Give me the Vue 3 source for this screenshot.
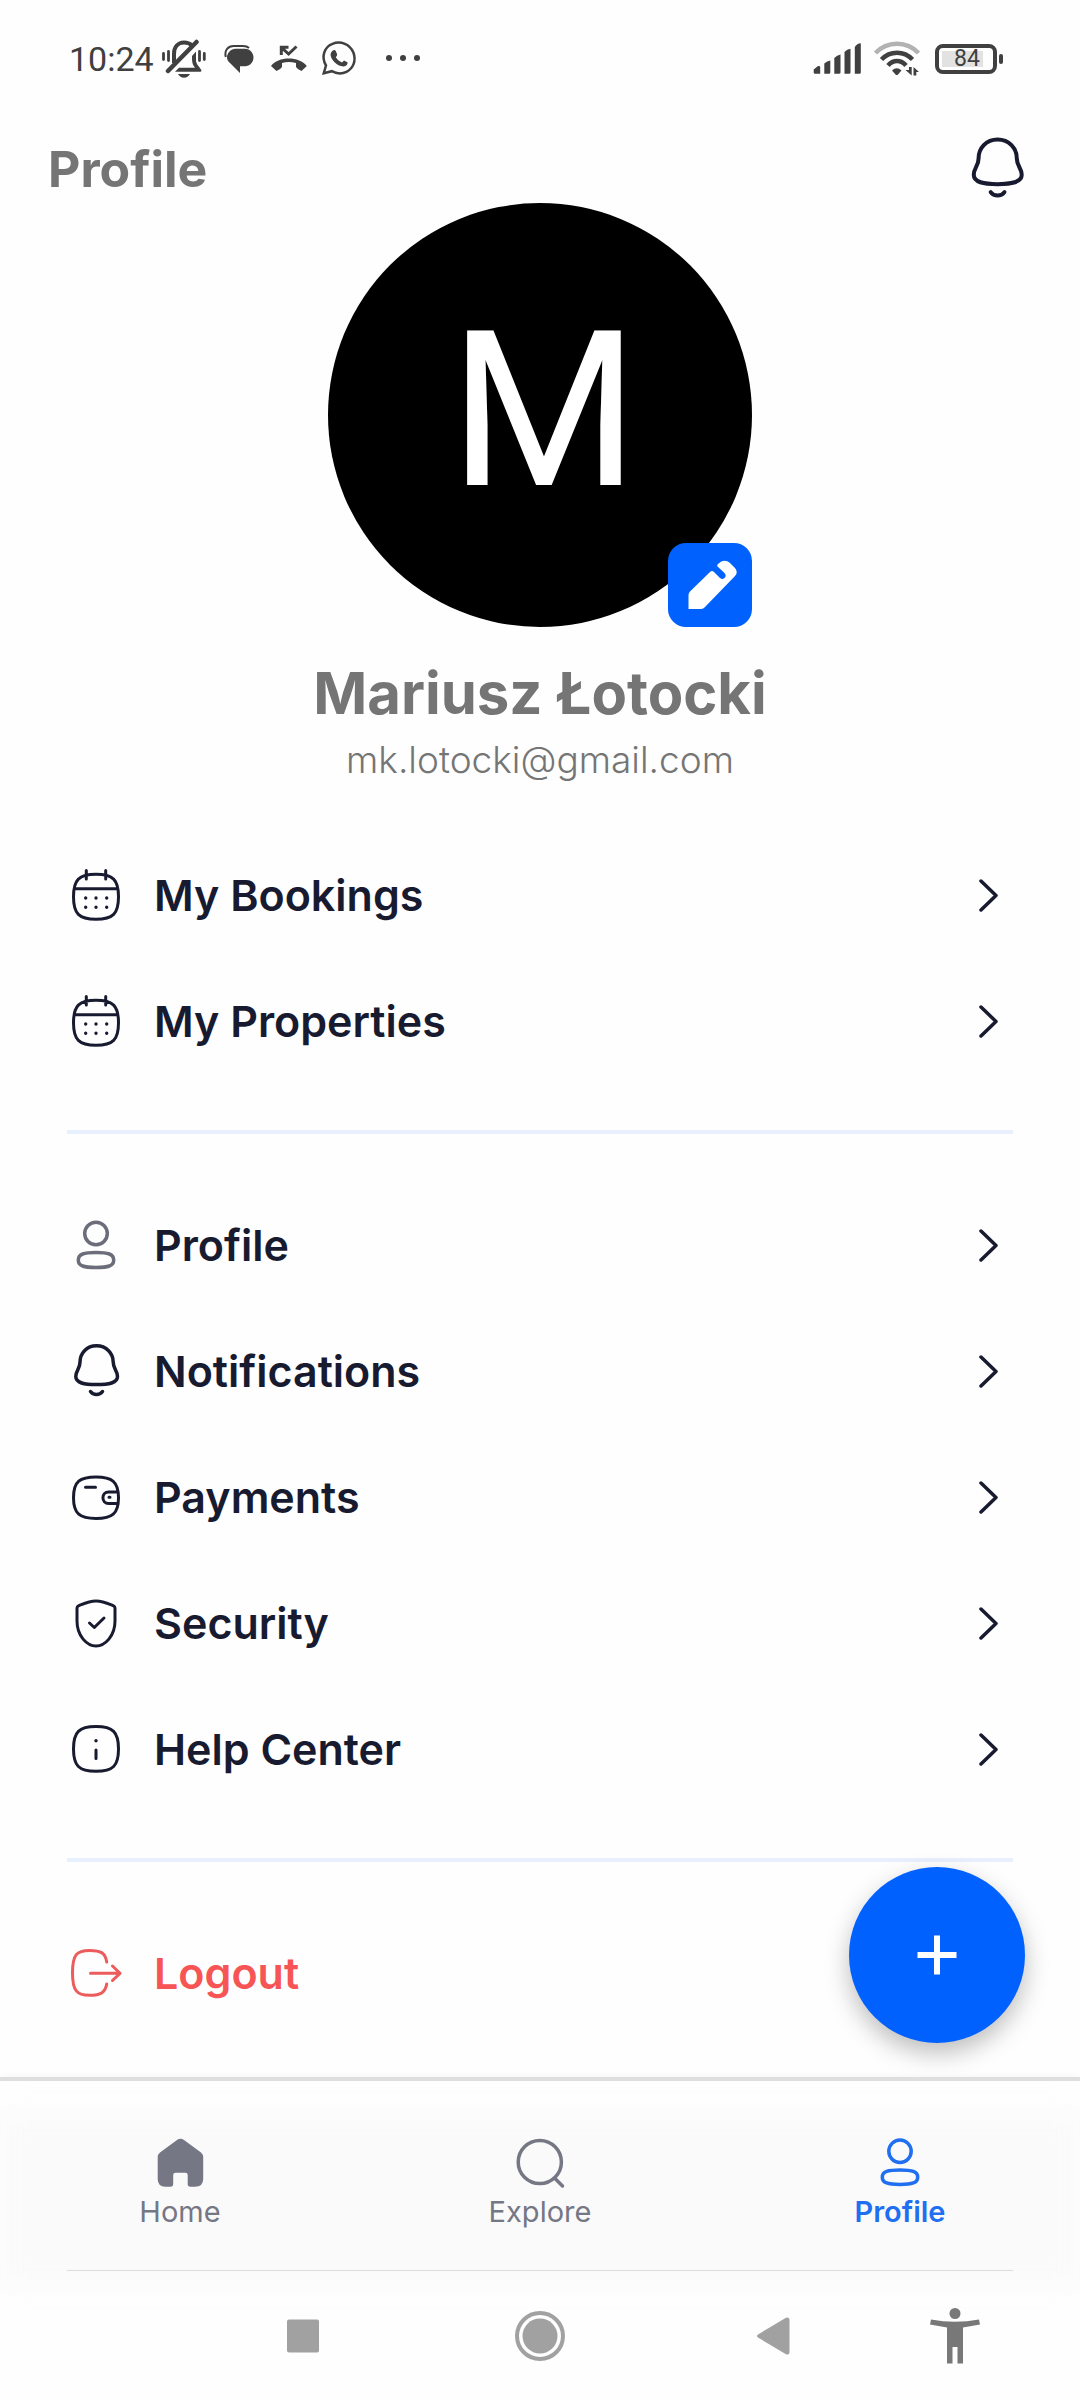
<script setup>
import { ref } from 'vue'

const user = { name: 'Mariusz Łotocki', email: 'mk.lotocki@gmail.com', initial: 'M' }

const groups = [
  [
    { icon: 'calendar', label: 'My Bookings' },
    { icon: 'calendar', label: 'My Properties' },
  ],
  [
    { icon: 'person', label: 'Profile' },
    { icon: 'bell', label: 'Notifications' },
    { icon: 'wallet', label: 'Payments' },
    { icon: 'shield', label: 'Security' },
    { icon: 'info', label: 'Help Center' },
  ],
  [{ icon: 'logout', label: 'Logout', danger: true }],
]

const tabs = ['Home', 'Explore', 'Profile']
const active = ref('Profile')
</script>

<template>
  <div class="screen">
    <div class="status">
      <div class="status-side">
        <span class="time">10:24</span>
        <svg width="44" height="40" viewBox="0 0 44 40" fill="none" stroke="#404040">
          <path d="M12 24V15C12 8 16 3.500 22 3.500C25.500 3.500 28 4.500 30 6.500" stroke-width="4" />
          <path d="M34 12.500V21C34 26 37.500 27 39.500 31.500Q39.500 32.700 38 32.700H13L17 28.700H33C30 25 30 22 30 17Z" fill="#404040" stroke="none" />
          <path d="M34.500 3L6 32" stroke-width="4.500" stroke-linecap="round" />
          <path d="M16 35H28Q26 38.700 22 38.700T16 35Z" fill="#404040" stroke="none" />
          <path d="M1.500 14.500V20.500M6.500 12.500V21.500M37.500 12.500V21.500M42.300 14.500V20.500" stroke-width="2.800" stroke-linecap="round" />
        </svg>
        <svg width="48" height="40" viewBox="0 0 48 40" fill="#404040">
          <path d="M21.500 9.800H31C36 9.800 39.500 14 39.500 18.500S36 27.300 31 27.300H26V33.900L16.500 24.500C14 22.500 13 20.500 13 18.500C13 14 17 9.800 21.500 9.800Z" />
          <path d="M11.800 18C10 11 14.500 7 19.500 7H29Q33 7 35 9" fill="none" stroke="#404040" stroke-width="2" />
        </svg>
        <svg width="38" height="40" viewBox="0 0 38 40" fill="#404040">
          <path d="M1 27C8 17 29.500 17 36.800 27L31.500 32Q27 30 26 28V24C21 22.500 16.500 22.500 12 24V28Q10.500 30.500 6.500 32Z" />
          <path d="M11.300 16V8.300H18.500M11.300 8.300L18.600 15L26.500 7.500" fill="none" stroke="#404040" stroke-width="3" />
        </svg>
        <svg width="46" height="40" viewBox="0 0 46 40" fill="none" stroke="#404040">
          <path d="M7.800 34.200L10 26.500C5 18 8 8 16.500 4.800C25 1.500 34 5.500 37.400 13.500C40.500 22 37 29.500 30.500 32.800C26 35 20.500 34.800 15.800 32.200Z" stroke-width="2.500" />
          <path d="M16.500 11.800Q18.500 10 19.800 12L21.200 15.500Q21 17 19.800 18.300C21.500 21 23.500 22.500 26 23.500L28 21.500L31.500 23.200C32 25 30.500 27 27.500 27.400C21 27.500 14 20 14.600 15Q15 13 16.500 11.800Z" fill="#404040" stroke="none" />
        </svg>
        <svg width="54" height="40" viewBox="0 0 54 40" fill="#404040">
          <circle cx="19" cy="19" r="3" /><circle cx="33" cy="19" r="3" /><circle cx="47" cy="19" r="3" />
        </svg>
      </div>
      <div class="status-side">
        <svg width="52" height="40" viewBox="0 0 52 40" fill="#404040">
          <path d="M1.700 30.500L6 27Q8.200 26.500 8.200 28V34.700H3Q1.700 34.700 1.700 33.500ZM12.300 24.500Q15 22 18.300 21.500V33.500Q18.300 34.700 17 34.700H12.300ZM22.300 19Q25 16 28.500 15.500V33.500Q28.500 34.700 27 34.700H22.300ZM32.500 13Q35 10 38.500 9.800V33.500Q38.500 34.700 37 34.700H32.500ZM42.800 8Q45 4.500 48.800 4.300V33.500Q48.800 34.700 47.500 34.700H42.800Z" />
        </svg>
        <svg width="52" height="40" viewBox="0 0 52 40" fill="none" stroke="#404040" stroke-width="4">
          <path d="M3.500 14C15 1.500 35 1.500 46.500 14" stroke="#b2b2b2" stroke-width="4.500" />
          <path d="M9.500 20.500C18 11.500 32 11.500 40.500 20.500M16 26.500C21 20.500 29 20.500 34 26.500" stroke-width="4.500" />
          <path d="M20 31.500Q24.700 27 29.500 31.500L26 35.500Q24.700 36.500 23.500 35.500Z" fill="#404040" stroke="none" />
          <path d="M39.700 28V36.500L33.500 31H37V28ZM41.500 36.500V28L47 33H44.300V36.500Z" fill="#404040" stroke="none" />
        </svg>
        <div class="battery"><div class="cell"><span class="charge">84</span></div><i class="nub"></i></div>
      </div>
    </div>

    <header class="top">
      <h1>Profile</h1>
      <button type="button" class="icon-button" aria-label="Notifications">
        <svg width="60" height="69" viewBox="0 0 52 60" fill="none" stroke="#181b30" stroke-width="3.500" stroke-linecap="round">
          <path d="M26.500 4.800C16.500 4.800 10 12.500 10 21C10 28 5.800 29.500 5.800 35.500C5.800 42 14 43.600 26.500 43.600S47.500 42 47.500 35.500C47.500 29.500 43.200 28 43.200 21C43.200 12.500 36.500 4.800 26.500 4.800Z" />
          <path d="M20.500 50.500C23.500 54.600 29.500 54.600 32.500 50.500" />
        </svg>
      </button>
    </header>

    <main>
      <section class="identity">
        <div class="avatar">
          <span class="initial">{{ user.initial }}</span>
          <button type="button" class="edit" aria-label="Edit photo">
            <svg width="84" height="84" viewBox="0 0 84 84" fill="#fff">
              <path d="M20.500 66V52Q20.500 50 22 48.500L42 29Q44 27 46 29L52 35Q55 37 57 34.500Q58.500 32.500 56.500 30L49.500 23.500Q48.500 22 50 21C54 17 58 16.500 62 20L67 25Q70.500 29.500 67 33L37 64Q35.500 66 33 66Z" />
            </svg>
          </button>
        </div>
        <h2>{{ user.name }}</h2>
        <p class="email">{{ user.email }}</p>
      </section>

      <nav class="menu" aria-label="Account">
        <ul v-for="(group, g) in groups" :key="g">
          <li v-for="item in group" :key="item.label">
            <a href="#" class="row" :class="{ danger: item.danger }">
              <svg class="glyph" :class="item.icon" width="52" height="60" viewBox="0 0 52 60">
                <template v-if="item.icon === 'calendar'">
                  <path d="M26 9.200C43 9.200 48.500 14.700 48.500 31.700S43 54.200 26 54.200S3.500 48.700 3.500 31.700S9 9.200 26 9.200ZM5 23.700H47M16.300 5.500V14M35.700 5.500V14" />
                  <path d="M15.700 33h.01M26 33h.01M36.700 33h.01M15.700 42.300h.01M26 42.300h.01M36.700 42.300h.01" class="dots" />
                </template>
                <template v-else-if="item.icon === 'person'">
                  <circle cx="26" cy="18.500" r="11.300" />
                  <path d="M26 37.500C38 37.500 43.700 39 43.700 45S38 52.500 26 52.500S8.300 51 8.300 45S14 37.500 26 37.500Z" />
                </template>
                <template v-else-if="item.icon === 'bell'">
                  <path d="M26.500 4.800C16.500 4.800 10 12.500 10 21C10 28 5.800 29.500 5.800 35.500C5.800 42 14 43.600 26.500 43.600S47.500 42 47.500 35.500C47.500 29.500 43.200 28 43.200 21C43.200 12.500 36.500 4.800 26.500 4.800Z" />
                  <path d="M20.500 50.500C23.500 54.600 29.500 54.600 32.500 50.500" />
                </template>
                <template v-else-if="item.icon === 'wallet'">
                  <path d="M26 10C42 10 48.500 14.500 48.500 30.700S42 51.500 26 51.500S3.500 47 3.500 30.700S10 10 26 10ZM47.500 25H38.700C31 25 31 36.500 38.700 36.500H47.500M15.500 20.300H25.500M39 30.300H40" />
                </template>
                <template v-else-if="item.icon === 'shield'">
                  <path d="M26 7.900C33 7.900 38 10.500 43.500 12.800Q45 13.500 45 15V28C45 43 35 53 26 53S7 43 7 28V15Q7 13.500 8.500 12.800C14 10.500 19 7.900 26 7.900ZM19.500 30L24.300 34.500L34 25" />
                </template>
                <template v-else-if="item.icon === 'info'">
                  <path d="M26 7.500C43 7.500 48.500 13 48.500 30S43 52.300 26 52.300S3.500 47 3.500 30S9 7.500 26 7.500ZM26 31V39.500" />
                  <path d="M26 21.700h.01" class="dots" />
                </template>
                <template v-else>
                  <path d="M36.700 19C35.500 10 31 7.500 19.500 7.500C7 7.500 2.500 11 2.500 30C2.500 48 7 52.300 19.500 52.300C31 52.300 35.500 49 36.700 41M20.500 30.300H49.500M42.500 23L50 30.300L42.500 37.500" />
                </template>
              </svg>
              <span class="label">{{ item.label }}</span>
              <svg v-if="!item.danger" class="chevron" width="22" height="34" viewBox="0 0 22 34">
                <path d="M3 3L18 17.500L3 32" />
              </svg>
            </a>
          </li>
        </ul>
      </nav>

      <button type="button" class="fab" aria-label="Add">
        <svg width="40" height="40" viewBox="0 0 40 40" stroke="#fff" stroke-width="6"><path d="M20 0.500V39.500M0.500 20H39.500" /></svg>
      </button>
    </main>

    <nav class="tabs" aria-label="Main">
      <button v-for="tab in tabs" :key="tab" type="button" class="tab" :class="{ active: tab === active }" @click="active = tab">
        <svg width="50" height="54" viewBox="0 0 50 54" fill="none" stroke="currentColor" stroke-width="3.500" stroke-linecap="round">
          <path v-if="tab === 'Home'" fill="currentColor" stroke="none" d="M22 4Q25.400 1.500 29 4L46 16.500Q48.200 18.500 48.200 21V43Q48.200 50.700 40 50.700H35.500Q32.700 50.700 32.700 48V39Q32.700 36.700 30.500 36.700H20.500Q18.200 36.700 18.200 39V48Q18.200 50.700 15.500 50.700H10.500Q2.700 50.700 2.700 43V21Q2.700 18.500 5 16.500Z" />
          <template v-else-if="tab === 'Explore'">
            <circle cx="24.800" cy="26" r="21.600" />
            <path d="M40 42.500L47.500 50" />
          </template>
          <template v-else>
            <circle cx="25" cy="15.300" r="11.200" />
            <path d="M25 34C37 34 42.700 35.500 42.700 41.200S37 48.400 25 48.400S7.300 47 7.300 41.200S13 34 25 34Z" />
          </template>
        </svg>
        <span>{{ tab }}</span>
      </button>
    </nav>

    <div class="system">
      <svg width="56" height="60" viewBox="0 0 56 60"><rect x="12" y="13.500" width="32" height="33" rx="2" fill="#a1a1a1" /></svg>
      <svg width="56" height="60" viewBox="0 0 56 60"><circle cx="28" cy="30" r="23" fill="none" stroke="#a1a1a1" stroke-width="4" /><circle cx="28" cy="30" r="17.500" fill="#a1a1a1" /></svg>
      <svg width="56" height="60" viewBox="0 0 56 60"><path d="M13 28.500L41 11.700Q44.500 10.500 44.500 14V46Q44.500 49.500 41 48.300L13 31.500Q11 30 13 28.500Z" fill="#a1a1a1" /></svg>
      <svg width="56" height="60" viewBox="0 0 56 60" fill="#787878">
        <circle cx="28" cy="7.500" r="5.500" />
        <path d="M4 13.500Q28 18 52 13.500L53 18.500L36 21.500V57.500H30.500V41H25.500V57.500H20V21.500L3 18.500Z" />
      </svg>
    </div>
  </div>
</template>

<style>
body {
  margin: 0;
  background: #fefefe;
}
</style>

<style scoped>
.screen {
  display: flex;
  flex-direction: column;
  min-height: 100vh;
  background: #fefefe;
  color: #181b30;
  font-family: Inter, "Noto Sans", sans-serif;
}
svg {
  display: block;
  flex: none;
}
button {
  margin: 0;
  padding: 0;
  border: 0;
  background: none;
  font: inherit;
  color: inherit;
  cursor: pointer;
}

.status {
  display: flex;
  align-items: center;
  justify-content: space-between;
  height: 118px;
  padding: 0 77px 0 69px;
  color: #404040;
  font-family: Roboto, sans-serif;
}
.status-side {
  display: flex;
  align-items: center;
  gap: 8px;
}
.time {
  font-size: 34px;
  line-height: 40px;
}
.battery {
  display: flex;
  align-items: center;
  gap: 2px;
  padding-left: 3px;
}
.cell {
  box-sizing: border-box;
  width: 62px;
  height: 30px;
  padding: 3px;
  border: 4px solid #404040;
  border-radius: 8px;
}
.charge {
  display: block;
  width: 41px;
  background: #e2e2e2;
  font-size: 23px;
  line-height: 16px;
  text-indent: 12px;
}
.nub {
  width: 4px;
  height: 10px;
  border-radius: 2px;
  background: #404040;
}

.top {
  display: flex;
  align-items: center;
  justify-content: space-between;
  margin-top: 16px;
  padding: 0 53px 0 48px;
}
h1,
h2,
.email {
  margin: 0;
  color: #757575;
}
h1 {
  font-size: 50px;
  line-height: 60px;
}

main {
  position: relative;
  flex: 1;
  padding-bottom: 41px;
}
.identity {
  display: flex;
  flex-direction: column;
  align-items: center;
}
.avatar {
  position: relative;
  width: 424px;
  height: 424px;
  border-radius: 50%;
  background: #000;
  color: #fff;
  text-align: center;
}
.initial {
  display: block;
  padding-left: 8px;
  font-family: Roboto, sans-serif;
  font-size: 217px;
  line-height: 416px;
}
.edit {
  position: absolute;
  right: 0;
  bottom: 0;
  border-radius: 18px;
  background: #0061ff;
}
h2 {
  margin-top: 36px;
  font-size: 58px;
  line-height: 60px;
}
.email {
  margin-top: 15px;
  font-size: 37px;
  font-weight: 300;
  line-height: 44px;
}

.menu {
  margin: 50px 67px 0;
}
ul {
  margin: 0;
  padding: 0;
  list-style: none;
}
ul + ul {
  margin-top: 46px;
  padding-top: 48px;
  border-top: 4px solid #e8effd;
}
.row {
  display: flex;
  align-items: center;
  gap: 32px;
  height: 126px;
  padding: 0 13px 0 3px;
  color: #181b30;
  text-decoration: none;
}
.glyph,
.chevron {
  fill: none;
  stroke: #181b30;
  stroke-width: 3;
  stroke-linecap: round;
  stroke-linejoin: round;
}
.chevron,
.bell {
  stroke-width: 3.5;
}
.person {
  stroke: #6c6d7a;
  stroke-width: 3.5;
}
.dots {
  stroke-width: 3.4;
}
.label {
  flex: 1;
  font-size: 43px;
  font-weight: 600;
  line-height: 52px;
}
.danger {
  color: #f75555;
}
.danger .glyph {
  stroke: #ec5c5c;
}

.fab {
  position: absolute;
  right: 55px;
  bottom: 34px;
  display: flex;
  align-items: center;
  justify-content: center;
  width: 176px;
  height: 176px;
  border-radius: 50%;
  background: #0061ff;
  box-shadow: 0 10px 24px rgba(0, 0, 0, 0.26);
}

.tabs {
  position: relative;
  display: grid;
  grid-template-columns: 1fr 1fr 1fr;
  height: 190px;
  border-top: 4px solid #dedede;
  box-shadow: 0 -2px 6px rgba(0, 0, 0, 0.03);
}
.tabs::before {
  content: "";
  position: absolute;
  inset: 32px 0 -16px;
  background: #fafafa;
  filter: blur(12px);
}
.tabs::after {
  content: "";
  position: absolute;
  inset: auto 67px 0;
  height: 1px;
  background: #dcdcdc;
}
.tab {
  position: relative;
  display: flex;
  flex-direction: column;
  align-items: center;
  gap: 4px;
  padding-top: 55px;
  color: #757784;
  font-size: 29px;
  line-height: 36px;
}
.tab.active {
  color: #1f6ff0;
  font-weight: 600;
}

.system {
  position: relative;
  display: grid;
  grid-template-columns: 237fr 237fr 229fr 135fr;
  align-items: center;
  justify-items: center;
  height: 129px;
  padding: 0 58px 0 184px;
}
</style>
